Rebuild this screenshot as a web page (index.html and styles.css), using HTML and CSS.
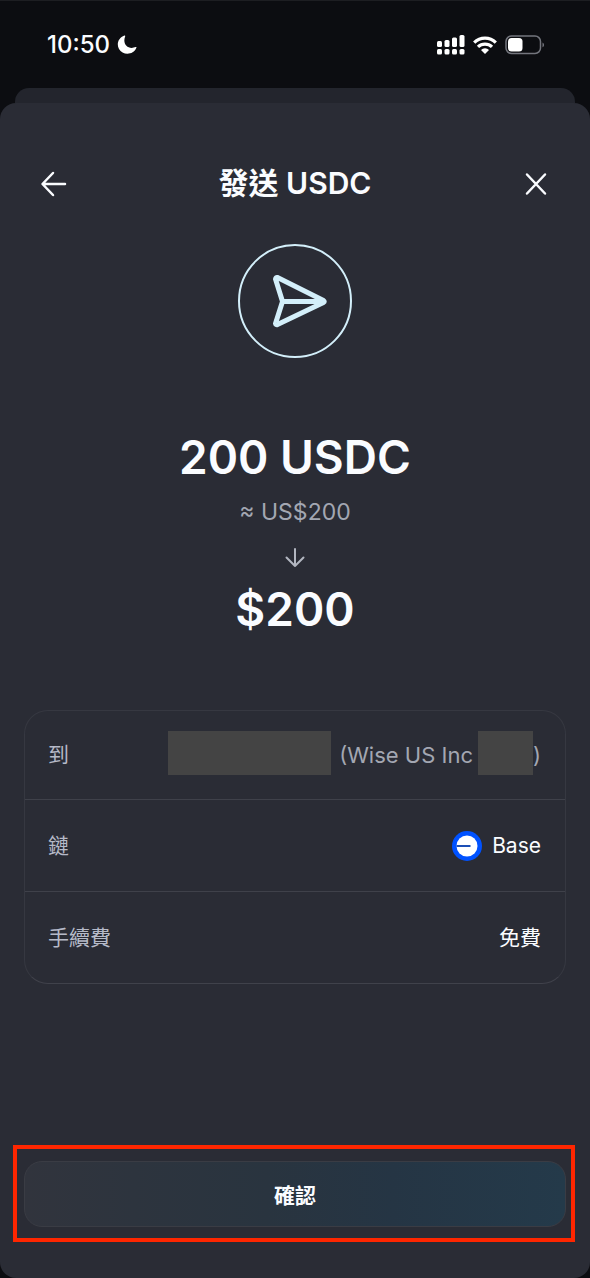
FILE: index.html
```html
<!DOCTYPE html>
<html lang="zh-Hant">
<head>
<meta charset="utf-8">
<meta name="viewport" content="width=device-width, initial-scale=1">
<title>發送 USDC</title>
<link rel="stylesheet" href="styles.css">
</head>
<body>
<div class="screen">
  <div class="status">
    <div class="status-side">
      <span class="time">10:50</span>
      <svg class="moon" width="20" height="20" viewBox="0 0 20 20" aria-hidden="true"><path d="M7.400.600C1.500 2.800-.8 9 2 14c3.400 6.200 14 6.800 17.400-1.200.2-.6-.2-.9-.7-.7C11.200 15 5 9.600 8.200 1.300c.2-.5-.2-.9-.8-.7z" fill="#fff"/></svg>
    </div>
    <div class="status-side status-right">
      <svg width="28" height="20" viewBox="0 0 28 20" fill="#fff" aria-hidden="true">
        <rect x="0" y="6" width="5" height="6" rx="1.500"/><rect x="7.500" y="5" width="5" height="7" rx="1.500"/><rect x="15" y="2.500" width="5" height="9.500" rx="1.500"/><rect x="22.500" y="0" width="5" height="12" rx="1.500"/>
        <rect x="0" y="14" width="5" height="5.500" rx="1.500"/><rect x="7.500" y="14" width="5" height="5.500" rx="1.500"/><rect x="15" y="14" width="5" height="5.500" rx="1.500"/><rect x="22.500" y="14" width="5" height="5.500" rx="1.500"/>
      </svg>
      <svg width="24" height="18" viewBox="0 0 24 18" aria-hidden="true">
        <g fill="none" stroke="#fff" stroke-width="3.200"><path d="M1.200 6.600a15.300 15.300 0 0 1 21.600 0"/><path d="M5 10.900a10 10 0 0 1 14 0"/></g>
        <path d="M12 18l-4-4a5.700 5.700 0 0 1 8 0z" fill="#fff"/>
      </svg>
      <svg width="40" height="20" viewBox="0 0 40 20" aria-hidden="true">
        <rect x="1" y="1" width="34.500" height="17.500" rx="5.500" fill="none" stroke="#73757d" stroke-width="1.500"/>
        <rect x="3" y="3" width="14.500" height="13.500" rx="3.500" fill="#fff"/>
        <path d="M37.500 7.500c2 .8 2 4 0 4.800z" fill="#73757d"/>
      </svg>
    </div>
  </div>
  <div class="sheet-behind"></div>
  <main class="sheet">
    <header class="header">
      <button class="icon-button" type="button" aria-label="返回"><svg width="28" height="28" viewBox="0 0 28 28"><path d="M25 15H3M13 4L2.500 15 13 26"/></svg></button>
      <h1 class="title">發送 USDC</h1>
      <button class="icon-button" type="button" aria-label="關閉"><svg width="28" height="28" viewBox="0 0 28 28"><path d="M5 5.500l18 19M23 5.500L5 24.500"/></svg></button>
    </header>
    <div class="send-badge">
      <svg width="56" height="54" viewBox="0 0 56 54" aria-hidden="true"><path d="M5.500 3.500L51.500 26.500Q53 27.500 51.500 28.500L5.500 50.500Q3.800 51 3.500 49.500L10.500 27.500 3.500 5Q3.800 3 5.500 3.500zM10.500 27.500H51"/></svg>
    </div>
    <section class="amounts">
      <p class="amount">200 USDC</p>
      <p class="approx">≈ US$200</p>
      <svg class="down" width="20" height="20" viewBox="0 0 20 20" aria-hidden="true"><path d="M10 1v17M1.500 9.500L10 18l8.500-8.500"/></svg>
      <p class="amount">$200</p>
    </section>
    <dl class="details">
      <div class="row">
        <dt>到</dt>
        <dd class="recipient"><span class="mask mask-long"></span><span>(Wise US Inc</span><span class="mask mask-short"></span><span>)</span></dd>
      </div>
      <div class="row">
        <dt>鏈</dt>
        <dd class="chain"><svg width="30" height="30" viewBox="0 0 30 30" aria-hidden="true"><circle cx="15" cy="15" r="15" fill="#0052ff"/><circle cx="15" cy="15" r="10.500" fill="#fff"/><path d="M4.500 14H18.500v2H4.500z" fill="#1d4fb5"/></svg><span>Base</span></dd>
      </div>
      <div class="row">
        <dt>手續費</dt>
        <dd>免費</dd>
      </div>
    </dl>
    <footer class="highlight">
      <button class="confirm" type="button">確認</button>
    </footer>
  </main>
</div>
</body>
</html>
```
FILE: styles.css
```css
* { box-sizing: border-box; margin: 0; }

body {
  background: #0c0d11;
  color: #fafcff;
  font-family: Inter, "Noto Sans CJK TC", sans-serif;
}

.screen {
  display: flex;
  flex-direction: column;
  min-height: 100vh;
  border-top: 1px solid #1d1e22;
}

.status {
  display: flex;
  justify-content: space-between;
  align-items: center;
  height: 87px;
  padding: 0 45px 0 47px;
}

.status-side { display: flex; align-items: center; gap: 7px; }
.status-right { gap: 8px; }
.time { font-size: 24px; font-weight: 500; line-height: 28px; }

.sheet-behind {
  height: 15px;
  margin: 0 15px;
  border-radius: 14px 14px 0 0;
  background: #23252d;
}

.sheet {
  flex: 1;
  display: flex;
  flex-direction: column;
  padding: 56px 0 36px;
  border-radius: 16px;
  background: #2a2c35;
}

.header {
  display: flex;
  justify-content: space-between;
  align-items: center;
  padding: 0 40px;
}

.title { font-size: 30px; font-weight: 600; line-height: 48px; }

.icon-button {
  display: flex;
  padding: 0;
  border: 0;
  background: none;
}

.icon-button path {
  fill: none;
  stroke: #fafcff;
  stroke-width: 2.5;
  stroke-linecap: round;
  stroke-linejoin: round;
}

.send-badge {
  display: grid;
  place-items: center;
  align-self: center;
  width: 114px;
  height: 114px;
  margin-top: 37px;
  padding-left: 10px;
  border: 2px solid #d3effa;
  border-radius: 50%;
}

.send-badge path {
  fill: none;
  stroke: #d3effa;
  stroke-width: 5;
  stroke-linejoin: round;
}

.amounts {
  display: flex;
  flex-direction: column;
  align-items: center;
  margin-top: 67px;
}

.amount { font-size: 46px; font-weight: 600; line-height: 64px; }
.approx { margin-top: 7px; color: #a3a7b2; font-size: 23px; line-height: 32px; }
.down { margin: 20px 0 9px; }

.down path {
  fill: none;
  stroke: #b2b6c0;
  stroke-width: 2;
  stroke-linecap: round;
  stroke-linejoin: round;
}

.details {
  margin: 69px 24px 32px;
  border: 1px solid #363841;
  border-bottom-color: #40424b;
  border-radius: 24px;
}

.row {
  display: flex;
  justify-content: space-between;
  align-items: center;
  min-height: 92px;
  padding: 0 24px 0 23px;
  font-size: 21px;
  line-height: 32px;
}

.row:first-child { min-height: 88px; }
.row + .row { border-top: 1px solid #3f414a; }
.row dt { color: #b6bac8; }
.row dd { display: flex; align-items: center; }
.row .recipient { color: #a3a7b2; font-size: 22px; }
.chain { gap: 10px; }

.mask { height: 44px; margin-bottom: 5px; background: #444; }
.mask-long { width: 163px; margin-right: 8px; }
.mask-short { width: 55px; margin-left: 5px; }

.highlight {
  margin: auto 15px 0 13px;
  padding: 12px 5px 11px 7px;
  border: 4px solid #ff2600;
}

.confirm {
  display: block;
  width: 100%;
  height: 66px;
  border: 1px solid #3a3c44;
  border-radius: 18px;
  background: linear-gradient(90deg, #31343d 0%, #2d343e 20%, #29343f 45%, #253544 68%, #243a4a 100%);
  color: #fafcff;
  font: inherit;
  font-size: 21px;
  font-weight: 600;
}
```
